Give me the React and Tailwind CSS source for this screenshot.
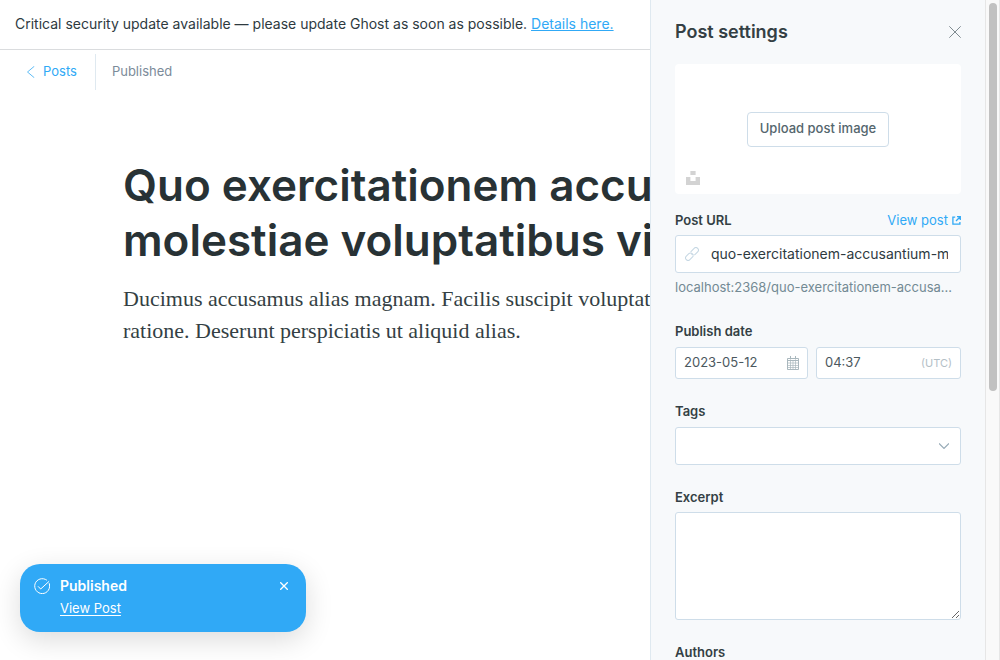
import React from "react";

const fieldBorder = "rounded-[3px] border border-[#cedde9] bg-white";

function ChevronLeft() {
  return (
    <svg className="h-3 w-3" viewBox="0 0 12 12" fill="none" stroke="#5fbcf5" strokeWidth="1" strokeLinecap="round" aria-hidden="true">
      <path d="M9 .5 2.500 6 9 11.500" />
    </svg>
  );
}

function CheckCircle() {
  return (
    <svg className="h-4 w-4" viewBox="0 0 16 16" fill="none" stroke="white" strokeWidth="1" strokeLinecap="round" strokeLinejoin="round" aria-hidden="true">
      <path d="M15.300 5.600A7.500 7.500 0 1 1 12.600 2" />
      <path d="M4.300 8.600 6.700 11 14.800 3.600" />
    </svg>
  );
}

function Cross({ className }) {
  return (
    <svg className={className} viewBox="0 0 12 12" fill="none" stroke="currentColor" aria-hidden="true">
      <path d="M.3.300l11.400 11.400M11.700.300.300 11.700" />
    </svg>
  );
}

function UnsplashMark() {
  return (
    <svg className="h-[14px] w-[14px]" viewBox="0 0 14 14" fill="#d3d3d3" aria-hidden="true">
      <path d="M4.400 0h5.200v4H4.400zM0 6h4.400v4h5.200V6H14v8H0z" />
    </svg>
  );
}

function ExternalMark() {
  return (
    <svg className="h-[9px] w-[9px]" viewBox="0 0 9 9" fill="none" stroke="#30a9f6" strokeWidth="1.300" aria-hidden="true">
      <path d="M3.200 1.200H.9v7h7V6M5 .7h3.300V4M8.200.800 4 5" />
    </svg>
  );
}

function LinkMark() {
  return (
    <svg className="h-[14px] w-[14px]" viewBox="0 0 14 14" fill="none" stroke="#c5d7e3" strokeWidth="1" strokeLinecap="round" aria-hidden="true">
      <g transform="rotate(-45 7 7)">
        <path d="M6 9.500H1.500a2.500 2.500 0 0 1 0-5H5A2.500 2.500 0 0 1 7.300 7.800" />
        <path d="M8 4.500h4.500a2.500 2.500 0 0 1 0 5H9A2.500 2.500 0 0 1 6.700 6.200" />
      </g>
    </svg>
  );
}

function CalendarMark() {
  return (
    <svg className="h-[14px] w-[12px]" viewBox="0 0 12 14" fill="none" stroke="#a9b7bd" strokeWidth="1" aria-hidden="true">
      <path d="M.5 2.500h11v11H.5zM.5 4.500h11M3.500 0v3.500M8.500 0v3.500" />
      <path d="M1 7h10M1 9.500h10M1 11.500h10M3.500 5v8M6 5v8M8.500 5v8" strokeWidth=".7" />
    </svg>
  );
}

function Label({ htmlFor, children }) {
  return (
    <label htmlFor={htmlFor} className="text-[13px] leading-5 font-semibold text-[#343f44]">
      {children}
    </label>
  );
}

export default function App() {
  return (
    <div className="relative flex h-screen overflow-hidden bg-white font-['Inter',sans-serif] text-[#394047]">
      <div className="min-w-0 flex-1 overflow-hidden">
        <div className="w-screen">
          <div className="border-b border-[#dadcde] px-[15px] pt-3 pb-[13px] text-sm leading-6 text-[#2e3a3f]">
            Critical security update available — please update Ghost as soon as possible.{" "}
            <a href="#details" className="text-[#30a9f6] underline">Details here.</a>
          </div>

          <header className="flex h-[43px] items-center pl-[25px] text-[13px]">
            <a href="#posts" className="flex items-center gap-[6px] pr-[18px] text-[#30a9f6]">
              <ChevronLeft />
              Posts
            </a>
            <span className="flex h-9 items-center border-l border-[#dfe9f0] pl-4 text-[#7c8b9a]">Published</span>
          </header>

          <main className="mx-auto w-full max-w-[754px] pt-[65px]">
            <h1 className="text-[44px] leading-[55px] font-semibold text-[#283235]">
              Quo exercitationem accusantium molestiae voluptatibus vitae
            </h1>
            <p className="pt-[15px] font-['Liberation_Serif',serif] text-[22px] leading-8 text-[#343f44]">
              Ducimus accusamus alias magnam. Facilis suscipit voluptatem consequuntur rem ratione. Deserunt perspiciatis
              ut aliquid alias.
            </p>
          </main>
        </div>
      </div>

      <div
        role="status"
        className="absolute bottom-7 left-5 flex w-[286px] items-start rounded-[20px] bg-[#30a9f6] px-[14px] pt-3 pb-3 text-white shadow-[0_8px_28px_rgba(0,0,0,0.14)]"
      >
        <span className="pt-[2px]"><CheckCircle /></span>
        <div className="flex flex-1 flex-col pl-[10px]">
          <span className="text-sm leading-5 font-semibold">Published</span>
          <a href="#view" className="self-start text-[13px] leading-6 underline underline-offset-2">View Post</a>
        </div>
        <button type="button" aria-label="Dismiss" className="mt-[6px] mr-1">
          <Cross className="h-2 w-2 stroke-2" />
        </button>
      </div>

      <aside className="flex w-[350px] shrink-0 border-l border-[#dfe9f0] bg-[#f7f9fb]">
        <div className="min-w-0 flex-1 overflow-hidden px-6">
          <div className="flex h-16 items-center justify-between">
            <h2 className="text-lg font-semibold text-[#343f44]">Post settings</h2>
            <button type="button" aria-label="Close" className="text-[#7f8b90]">
              <Cross className="h-3 w-3 stroke-1" />
            </button>
          </div>

          <div className="relative flex h-[130px] items-center justify-center rounded-[4px] bg-white">
            <button type="button" className="h-[35px] rounded-[4px] border border-[#cedde9] px-3 text-[13px] font-medium text-[#54666d]">
              Upload post image
            </button>
            <button type="button" aria-label="Unsplash" className="absolute bottom-[9px] left-[11px]">
              <UnsplashMark />
            </button>
          </div>

          <form className="flex flex-col gap-[22px] pt-4">
            <div className="flex flex-col">
              <div className="flex items-center justify-between pb-[5px]">
                <Label htmlFor="url">Post URL</Label>
                <a href="#post" className="flex items-center gap-1 text-[13px] leading-5 text-[#30a9f6]">
                  View post <ExternalMark />
                </a>
              </div>
              <div className={`flex h-[38px] items-center gap-3 px-[9px] ${fieldBorder}`}>
                <LinkMark />
                <input id="url" defaultValue="quo-exercitationem-accusantium-molestiae" className="mr-[3px] min-w-0 flex-1 text-sm text-[#2e3a3f] outline-none" />
              </div>
              <p className="truncate pt-[2px] pr-1 text-[13px] leading-6 text-[#738a94]">
                localhost:2368/quo-exercitationem-accusantium-molestiae
              </p>
            </div>

            <div className="flex flex-col gap-[6px]">
              <Label htmlFor="date">Publish date</Label>
              <div className="flex gap-2">
                <div className={`flex h-8 w-[133px] items-center px-2 ${fieldBorder}`}>
                  <input id="date" defaultValue="2023-05-12" className="min-w-0 flex-1 text-[13px] text-[#4b585e] outline-none" />
                  <CalendarMark />
                </div>
                <div className={`flex h-8 min-w-0 flex-1 items-center px-2 ${fieldBorder}`}>
                  <input aria-label="Publish time" defaultValue="04:37" className="min-w-0 flex-1 text-[13px] text-[#4b585e] outline-none" />
                  <span className="text-[11px] text-[#b4c0c7]">(UTC)</span>
                </div>
              </div>
            </div>

            <div className="flex flex-col gap-[6px]">
              <Label htmlFor="tags">Tags</Label>
              <div className="grid items-center">
                <select id="tags" className={`col-start-1 row-start-1 h-[38px] w-full appearance-none px-3 ${fieldBorder}`}>
                  <option value=""></option>
                </select>
                <svg className="pointer-events-none col-start-1 row-start-1 mr-3 h-[6px] w-[10px] justify-self-end" viewBox="0 0 10 6" fill="none" stroke="#96aab6" strokeWidth="1.200" aria-hidden="true">
                  <path d="M0 .4 5 5.400l5-5" />
                </svg>
              </div>
            </div>

            <div className="flex flex-col gap-[5px]">
              <Label htmlFor="excerpt">Excerpt</Label>
              <textarea id="excerpt" className={`h-[108px] w-full resize-y p-2 text-[15px] ${fieldBorder}`} />
            </div>

            <span className="text-[13px] leading-5 font-semibold text-[#343f44]">Authors</span>
          </form>
        </div>
        <div aria-hidden="true" className="w-[15px] shrink-0 border-x border-[#e6e6e6] bg-[#f9f9f9] px-[3px] pt-[3px]">
          <div className="h-[59%] w-2 rounded-full bg-[#c1c1c1]" />
        </div>
      </aside>
    </div>
  );
}
